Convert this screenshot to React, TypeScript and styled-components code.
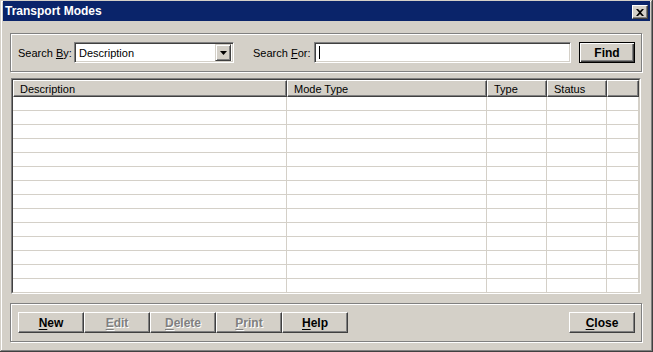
import React from "react";
import styled, { createGlobalStyle } from "styled-components";

const GlobalStyle = createGlobalStyle`
  html, body {
    margin: 0;
    padding: 0;
    background: #d4d0c8;
  }
  * {
    box-sizing: border-box;
  }
`;

const Window = styled.div`
  width: 653px;
  height: 352px;
  padding: 1px 3px 3px 3px;
  background: #d4d0c8;
  font-family: "Liberation Sans", Arial, sans-serif;
  font-size: 11px;
  color: #000;
  display: flex;
  flex-direction: column;
  box-shadow: inset -1px -1px #404040, inset 1px 1px #d4d0c8,
    inset -2px -2px #808080, inset 2px 2px #ffffff;
`;

const TitleBar = styled.div`
  height: 20px;
  background: #0a246a;
  display: flex;
  align-items: center;
  justify-content: space-between;
  padding: 0 2px 0 2px;
`;

const TitleText = styled.span`
  color: #fff;
  font-weight: bold;
  font-size: 12px;
`;

const TitleClose = styled.div`
  width: 16px;
  height: 14px;
  margin-top: 2px;
  background: #d4d0c8;
  border: 1px solid;
  border-color: #fff #404040 #404040 #fff;
  box-shadow: inset -1px -1px #808080;
  display: flex;
  align-items: center;
  justify-content: center;
`;

const Body = styled.div`
  flex: 1;
  display: flex;
  flex-direction: column;
  padding: 12px 8px 0 7px;
`;

const Group = styled.div<{ $mt?: number }>`
  height: 39px;
  margin-top: ${(p) => p.$mt ?? 0}px;
  border: 1px solid #808080;
  box-shadow: inset 1px 1px #fff, 1px 1px #fff;
  display: flex;
  align-items: center;
  padding: 0 6px 0 7px;
`;

const Label = styled.span<{ $w: number; $ml?: number }>`
  width: ${(p) => p.$w}px;
  margin-left: ${(p) => p.$ml ?? 0}px;
  white-space: nowrap;
  flex-shrink: 0;
`;

const Sunken = styled.div`
  height: 21px;
  background: #fff;
  border: 1px solid;
  border-color: #808080 #fff #fff #808080;
  box-shadow: inset 1px 1px #404040, inset -1px -1px #d4d0c8;
  display: flex;
  align-items: center;
`;

const Combo = styled(Sunken)`
  width: 160px;
  padding: 2px 2px 2px 4px;
  justify-content: space-between;
`;

const DropButton = styled.div`
  width: 16px;
  height: 17px;
  background: #d4d0c8;
  border: 1px solid;
  border-color: #d4d0c8 #404040 #404040 #d4d0c8;
  box-shadow: inset 1px 1px #fff, inset -1px -1px #808080;
  display: flex;
  align-items: center;
  justify-content: center;
`;

const TextInput = styled(Sunken)`
  flex: 1;
  padding-left: 4px;
`;

const Caret = styled.span`
  width: 1px;
  height: 13px;
  background: #000;
`;

const Button = styled.div<{ $w: number; $disabled?: boolean; $default?: boolean }>`
  width: ${(p) => p.$w}px;
  height: 21px;
  flex-shrink: 0;
  background: #d4d0c8;
  border: 1px solid;
  border-color: ${(p) => (p.$default ? "#000" : "#fff #404040 #404040 #fff")};
  box-shadow: ${(p) =>
    p.$default
      ? "inset 1px 1px #fff, inset -1px -1px #404040, inset -2px -2px #808080"
      : "inset -1px -1px #808080"};
  display: flex;
  align-items: center;
  justify-content: center;
  font-weight: bold;
  font-size: 12px;
  color: ${(p) => (p.$disabled ? "#808080" : "#000")};
  text-shadow: ${(p) => (p.$disabled ? "1px 1px #fff" : "none")};
  u {
    text-underline-offset: 2px;
  }
`;

const FindWrap = styled.div`
  margin-left: 8px;
`;

const ListFrame = styled.div`
  height: 216px;
  margin: 6px 1px 0 1px;
  border: 1px solid;
  border-color: #808080 #fff #fff #808080;
`;

const ListInner = styled.div`
  height: 100%;
  border: 1px solid;
  border-color: #404040 #d4d0c8 #d4d0c8 #404040;
  background: #fff;
  overflow: hidden;
`;

const HeaderRow = styled.div`
  height: 17px;
  display: flex;
  background: #d4d0c8;
`;

const HeaderCell = styled.div<{ $w?: number }>`
  width: ${(p) => (p.$w ? `${p.$w}px` : "auto")};
  flex: ${(p) => (p.$w ? "none" : 1)};
  height: 17px;
  padding-left: 6px;
  display: flex;
  align-items: center;
  border: 1px solid;
  border-color: #fff #404040 #404040 #fff;
  box-shadow: inset -1px -1px #808080;
`;

const Row = styled.div`
  height: 14px;
  display: flex;
  border-bottom: 1px solid #d4d0c8;
`;

const Cell = styled.div<{ $w?: number }>`
  width: ${(p) => (p.$w ? `${p.$w}px` : "auto")};
  flex: ${(p) => (p.$w ? "none" : 1)};
  border-right: 1px solid #d4d0c8;
`;

const Spacer = styled.div`
  flex: 1;
`;

const columns = [
  { name: "Description", w: 274 },
  { name: "Mode Type", w: 200 },
  { name: "Type", w: 60 },
  { name: "Status", w: 60 },
];

const rows = Array.from({ length: 15 }, (_, i) => i);

export default function App() {
  return (
    <>
      <GlobalStyle />
      <Window>
        <TitleBar>
          <TitleText>Transport Modes</TitleText>
          <TitleClose>
            <svg width="8" height="7" viewBox="0 0 8 7">
              <path
                d="M0 0h2l2 2 2-2h2L5 3.5 8 7H6L4 5 2 7H0l3-3.5z"
                fill="#000"
              />
            </svg>
          </TitleClose>
        </TitleBar>
        <Body>
          <Group>
            <Label $w={56}>
              Search <u>B</u>y:
            </Label>
            <Combo>
              <span>Description</span>
              <DropButton>
                <svg width="7" height="4" viewBox="0 0 7 4">
                  <path d="M0 0h7L3.5 4z" fill="#000" />
                </svg>
              </DropButton>
            </Combo>
            <Label $w={61} $ml={19}>
              Search <u>F</u>or:
            </Label>
            <TextInput>
              <Caret />
            </TextInput>
            <FindWrap>
              <Button $w={56} $default>
                Find
              </Button>
            </FindWrap>
          </Group>

          <ListFrame>
            <ListInner>
              <HeaderRow>
                {columns.map((c) => (
                  <HeaderCell key={c.name} $w={c.w}>
                    {c.name}
                  </HeaderCell>
                ))}
                <HeaderCell />
              </HeaderRow>
              {rows.map((r) => (
                <Row key={r}>
                  {columns.map((c) => (
                    <Cell key={c.name} $w={c.w} />
                  ))}
                  <Cell />
                </Row>
              ))}
            </ListInner>
          </ListFrame>

          <Group $mt={9}>
            <Button $w={66}>
              <span>
                <u>N</u>ew
              </span>
            </Button>
            <Button $w={66} $disabled>
              <span>
                <u>E</u>dit
              </span>
            </Button>
            <Button $w={66} $disabled>
              <span>
                <u>D</u>elete
              </span>
            </Button>
            <Button $w={66} $disabled>
              <span>
                <u>P</u>rint
              </span>
            </Button>
            <Button $w={66}>
              <span>
                <u>H</u>elp
              </span>
            </Button>
            <Spacer />
            <Button $w={66}>
              <span>
                <u>C</u>lose
              </span>
            </Button>
          </Group>
        </Body>
      </Window>
    </>
  );
}
